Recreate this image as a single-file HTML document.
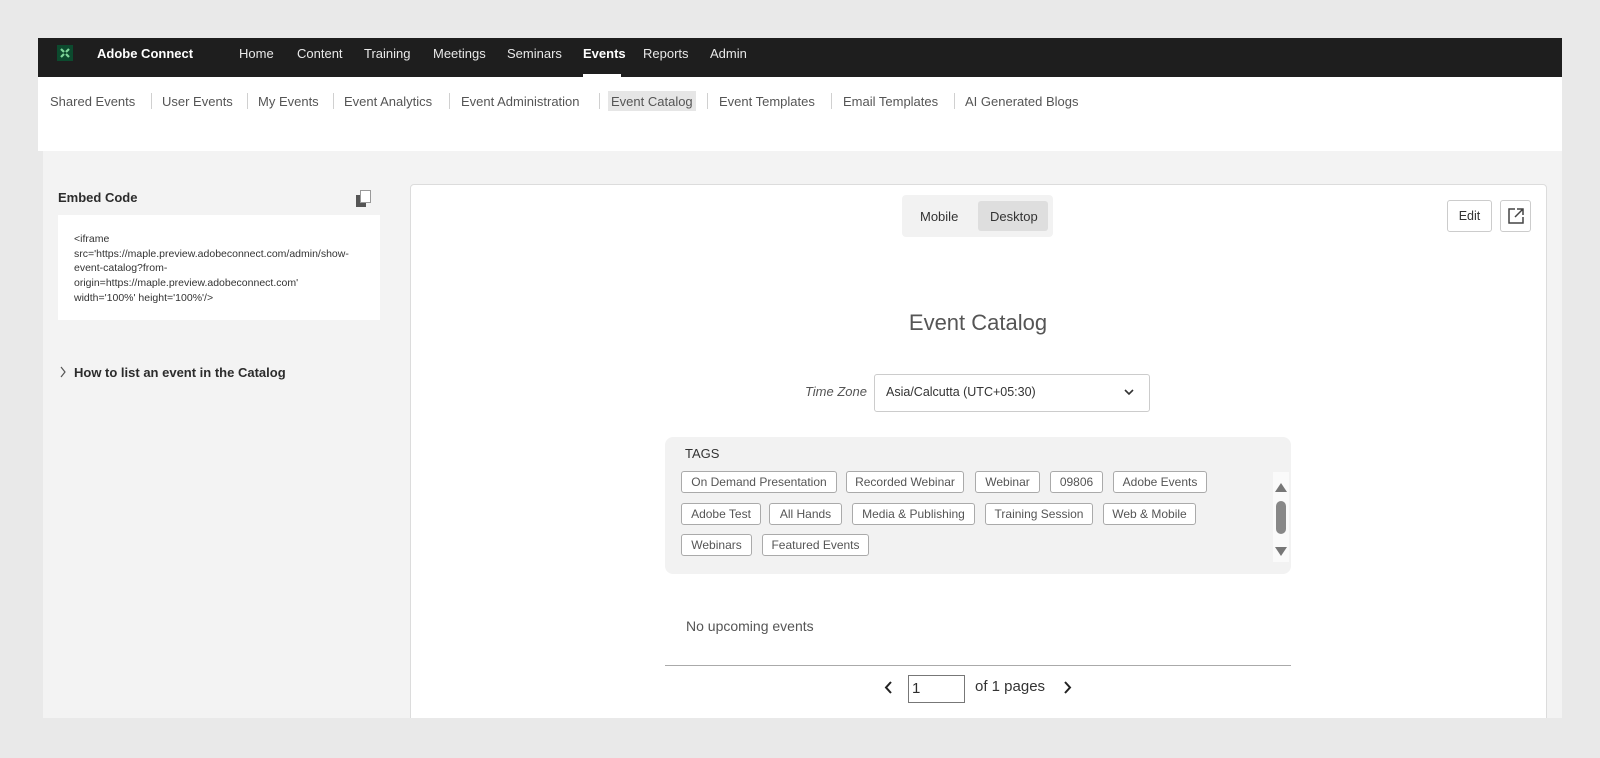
<!DOCTYPE html>
<html><head><meta charset="utf-8"><style>
*{box-sizing:border-box;margin:0;padding:0}
body{width:1600px;height:756px;background:#e9e9e9;font-family:"Liberation Sans",sans-serif;position:relative;overflow:hidden;color:#2c2c2c}
.a{position:absolute;white-space:nowrap}
#hdr{left:38px;top:38px;width:1524px;height:39px;background:#1e1e1e}
.nav{color:#e8e8e8;font-size:13px;top:46px}
#sub{left:38px;top:77px;width:1524px;height:74px;background:#fff}
.sn{top:94px;font-size:13px;color:#555}
.sep{top:93px;width:1px;height:16px;background:#d0d0d0}
#grey{left:43px;top:151px;width:1519px;height:567px;background:#f3f3f3}
#rp{left:410px;top:184px;width:1137px;height:540px;background:#fff;border:1px solid #dcdcdc;border-radius:4px}
.tag{position:absolute;height:22px;border:1px solid #aaa;border-radius:3px;background:#fff;font-size:12px;color:#555;text-align:center;line-height:20px}
</style></head><body>
<div class="a" id="hdr"></div>
<div class="a" style="left:57px;top:45px;width:16px;height:16px;background:#0c4a2e"></div>
<svg class="a" style="left:58px;top:46px" width="14" height="14" viewBox="0 0 14 14"><path d="M3 3l3 3M11 3L8 6M3 11l3-3M11 11L8 8" stroke="#7ed69a" stroke-width="2.2"/></svg>
<div class="a nav" style="left:97px;font-weight:bold;color:#fff">Adobe Connect</div>
<div class="a nav" style="left:239px">Home</div>
<div class="a nav" style="left:297px">Content</div>
<div class="a nav" style="left:364px">Training</div>
<div class="a nav" style="left:433px">Meetings</div>
<div class="a nav" style="left:507px">Seminars</div>
<div class="a nav" style="left:583px;color:#fff;font-weight:bold">Events</div>
<div class="a" style="left:583px;top:74px;width:38px;height:3px;background:#fff"></div>
<div class="a nav" style="left:643px">Reports</div>
<div class="a nav" style="left:710px">Admin</div>
<div class="a" id="sub"></div>
<div class="a sn" style="left:50px">Shared Events</div><div class="a sep" style="left:151px"></div>
<div class="a sn" style="left:162px">User Events</div><div class="a sep" style="left:247px"></div>
<div class="a sn" style="left:258px">My Events</div><div class="a sep" style="left:333px"></div>
<div class="a sn" style="left:344px">Event Analytics</div><div class="a sep" style="left:449px"></div>
<div class="a sn" style="left:461px">Event Administration</div><div class="a sep" style="left:599px"></div>
<div class="a" style="left:608px;top:91px;width:88px;height:20px;background:#e6e6e6"></div>
<div class="a sn" style="left:611px">Event Catalog</div><div class="a sep" style="left:707px"></div>
<div class="a sn" style="left:719px">Event Templates</div><div class="a sep" style="left:831px"></div>
<div class="a sn" style="left:843px">Email Templates</div><div class="a sep" style="left:954px"></div>
<div class="a sn" style="left:965px">AI Generated Blogs</div>
<div class="a" id="grey"></div>
<div class="a" style="left:58px;top:190px;font-size:13px;font-weight:bold;color:#2c2c2c">Embed Code</div>
<div class="a" style="left:356px;top:195px;width:10px;height:12px;background:#555"></div>
<div class="a" style="left:360px;top:190px;width:11px;height:13px;border:1px solid #999;background:#fff"></div>
<div class="a" style="left:58px;top:215px;width:322px;height:105px;background:#fff"></div>
<div class="a" style="left:74px;top:232px;font-size:10.5px;line-height:14.7px;color:#333">&lt;iframe<br>src='https://maple.preview.adobeconnect.com/admin/show-<br>event-catalog?from-<br>origin=https://maple.preview.adobeconnect.com'<br>width='100%' height='100%'/&gt;</div>
<svg class="a" style="left:59px;top:366px" width="8" height="12"><path d="M2 1l4 5-4 5" fill="none" stroke="#555" stroke-width="1.2"/></svg>
<div class="a" style="left:74px;top:365px;font-size:13px;font-weight:bold;color:#2c2c2c">How to list an event in the Catalog</div>
<div class="a" id="rp" style="height:540px"></div>
<div class="a" style="left:0;top:718px;width:1600px;height:40px;background:#e9e9e9"></div>
<div class="a" style="left:902px;top:195px;width:151px;height:42px;background:#f2f2f2;border-radius:4px"></div>
<div class="a" style="left:978px;top:201px;width:70px;height:30px;background:#dedede;border-radius:3px"></div>
<div class="a" style="left:920px;top:209px;font-size:13px;color:#333">Mobile</div>
<div class="a" style="left:990px;top:209px;font-size:13px;color:#333">Desktop</div>
<div class="a" style="left:1447px;top:200px;width:45px;height:32px;border:1px solid #ccc;border-radius:3px;font-size:12.5px;text-align:center;line-height:30px;color:#333">Edit</div>
<div class="a" style="left:1500px;top:200px;width:31px;height:32px;border:1px solid #ccc;border-radius:3px"></div>
<svg class="a" style="left:1507px;top:207px" width="18" height="18" viewBox="0 0 18 18"><path d="M8 2H2v14h14v-6" fill="none" stroke="#444" stroke-width="1.5"/><path d="M10 2h6v6M16 2L8 10" fill="none" stroke="#444" stroke-width="1.5"/></svg>
<div class="a" style="left:0;width:1956px;top:310px;font-size:22px;color:#555;text-align:center">Event Catalog</div>
<div class="a" style="left:800px;width:67px;text-align:right;top:384px;font-size:13px;font-style:italic;color:#555">Time Zone</div>
<div class="a" style="left:874px;top:374px;width:276px;height:38px;border:1px solid #ccc;border-radius:3px;background:#fff"></div>
<div class="a" style="left:886px;top:385px;font-size:12.5px;color:#333">Asia/Calcutta (UTC+05:30)</div>
<svg class="a" style="left:1124px;top:388px" width="10" height="8"><path d="M1 2l4 4 4-4" fill="none" stroke="#333" stroke-width="1.6"/></svg>
<div class="a" style="left:665px;top:437px;width:626px;height:137px;background:#f2f2f2;border-radius:8px"></div>
<div class="a" style="left:685px;top:446px;font-size:13px;color:#333">TAGS</div>
<div class="a" style="left:1273px;top:472px;width:16px;height:90px;background:#fafafa"></div>
<div class="a" style="left:1275px;top:483px;width:0;height:0;border-left:6px solid transparent;border-right:6px solid transparent;border-bottom:9px solid #777"></div>
<div class="a" style="left:1276px;top:501px;width:10px;height:33px;background:#888;border-radius:5px"></div>
<div class="a" style="left:1275px;top:547px;width:0;height:0;border-left:6px solid transparent;border-right:6px solid transparent;border-top:9px solid #777"></div>
<div class="tag" style="left:681px;top:471px;width:156px">On Demand Presentation</div>
<div class="tag" style="left:846px;top:471px;width:118px">Recorded Webinar</div>
<div class="tag" style="left:975px;top:471px;width:65px">Webinar</div>
<div class="tag" style="left:1050px;top:471px;width:53px">09806</div>
<div class="tag" style="left:1113px;top:471px;width:94px">Adobe Events</div>
<div class="tag" style="left:681px;top:503px;width:80px">Adobe Test</div>
<div class="tag" style="left:769px;top:503px;width:73px">All Hands</div>
<div class="tag" style="left:852px;top:503px;width:123px">Media &amp; Publishing</div>
<div class="tag" style="left:985px;top:503px;width:108px">Training Session</div>
<div class="tag" style="left:1103px;top:503px;width:93px">Web &amp; Mobile</div>
<div class="tag" style="left:681px;top:534px;width:71px">Webinars</div>
<div class="tag" style="left:762px;top:534px;width:107px">Featured Events</div>
<div class="a" style="left:686px;top:618px;font-size:14px;color:#555">No upcoming events</div>
<div class="a" style="left:665px;top:665px;width:626px;height:1px;background:#aaa"></div>
<svg class="a" style="left:884px;top:680px" width="10" height="15"><path d="M7 2L2 7.5 7 13" fill="none" stroke="#222" stroke-width="2"/></svg>
<div class="a" style="left:908px;top:675px;width:57px;height:28px;border:1px solid #777;background:#fff;font-size:15px;padding:4px 3px">1</div>
<div class="a" style="left:975px;top:678px;font-size:15px;color:#333">of 1 pages</div>
<svg class="a" style="left:1062px;top:680px" width="10" height="15"><path d="M3 2l5 5.5L3 13" fill="none" stroke="#222" stroke-width="2"/></svg>
</body></html>
